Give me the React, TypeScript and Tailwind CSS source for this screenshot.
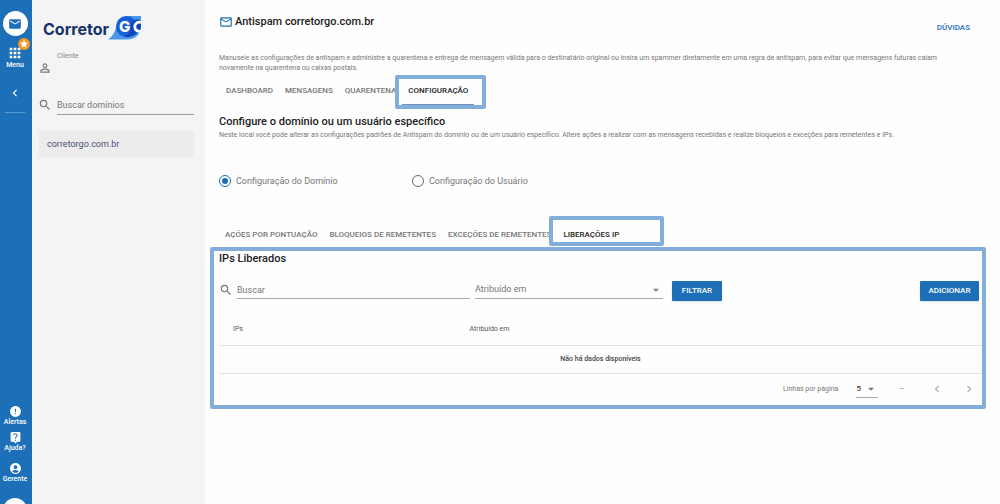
import React, { useState } from 'react';
import {
  MdAccountCircle,
  MdApps,
  MdArrowDropDown,
  MdChevronLeft,
  MdChevronRight,
  MdError,
  MdLiveHelp,
  MdMail,
  MdOutlineMail,
  MdPersonOutline,
  MdSearch,
  MdStar,
} from 'react-icons/md';

const mainTabs = ['Dashboard', 'Mensagens', 'Quarentena', 'Configuração'];

const configTabs = [
  'Ações por pontuação',
  'Bloqueios de remetentes',
  'Exceções de remetentes',
  'Liberações IP',
];

function Logo() {
  return (
    <svg width="102" height="26" viewBox="0 0 102 26" role="img" aria-label="Corretor GO">
      <text x="0" y="20" fontFamily="Inter, sans-serif" fontSize="16" fontWeight="700" fill="#16306b">
        Corretor
      </text>
      <path d="M65 24.5 C70 21 72 17 73 12 C75 5 80 1 87 1 H98 V12 C98 19 92 24.5 84 24.5 Z" fill="#4a98ec" />
      <circle cx="83.5" cy="11.5" r="10.5" fill="#1560d8" />
      <path d="M81 22 C87 19 88 14 88 9 C89 5 94 3 98 6 V12 C97 18 90 23 81 22 Z" fill="#0f46b8" />
      <text x="76" y="17" fontFamily="Inter, sans-serif" fontSize="15" fontWeight="800" fill="#fff">
        G
      </text>
      <path d="M98 7.4 A4.6 4.6 0 1 0 98 16" fill="none" stroke="#fff" strokeWidth="2.8" />
    </svg>
  );
}

function RailButton({ label, children }: { label: string; children: React.ReactNode }) {
  return (
    <button type="button" className="relative flex w-full flex-col items-center text-[7px] leading-[9px] font-medium text-white">
      {children}
      {label}
    </button>
  );
}

function Rail() {
  return (
    <nav className="flex w-8 shrink-0 flex-col items-center overflow-hidden bg-[#1d70b7] pr-[2px] pt-[11px] text-white">
      <button type="button" aria-label="E-mail" className="flex size-[25px] shrink-0 items-center justify-center rounded-full bg-white">
        <MdMail size={14} color="#1d70b7" />
      </button>
      <div className="mt-[9px] w-full">
        <RailButton label="Menu">
          <MdApps size={16} />
          <span className="absolute -top-[7px] right-0 flex size-3 items-center justify-center rounded-full bg-[#f8971d]">
            <MdStar size={10} />
          </span>
        </RailButton>
      </div>
      <button type="button" aria-label="Recolher" className="mt-4">
        <MdChevronLeft size={14} />
      </button>
      <hr className="mt-3 w-5 border-[#5b9bd0]" />
      <div className="mt-auto flex w-full flex-col">
        <RailButton label="Alertas">
          <MdError size={13} />
        </RailButton>
        <div className="mt-1">
          <RailButton label="Ajuda?">
            <MdLiveHelp size={13} />
          </RailButton>
        </div>
        <div className="mt-[9px]">
          <RailButton label="Gerente">
            <MdAccountCircle size={13} />
          </RailButton>
        </div>
      </div>
      <div className="mt-[14px] h-[6px] w-6 shrink-0 overflow-hidden">
        <div className="size-6 rounded-full bg-white" />
      </div>
    </nav>
  );
}

function Sidebar() {
  return (
    <aside className="w-[173px] shrink-0 bg-[#f4f4f4] pl-[7px] pr-[11px] pt-[15px]">
      <div className="pl-1">
        <Logo />
      </div>
      <div className="mt-[10px] grid grid-cols-[12px_1fr] gap-x-[6px]">
        <span className="col-start-2 text-[7px] leading-[10px] text-[#8a8a8a]">Cliente</span>
        <MdPersonOutline size={14} color="#777" className="col-start-1 -ml-px" />
      </div>
      <div className="mt-5 flex items-center gap-[5px]">
        <MdSearch size={14} color="#777" className="-ml-px shrink-0" />
        <input
          type="text"
          aria-label="Buscar domínios"
          placeholder="Buscar domínios"
          className="h-5 w-full min-w-0 border-b border-[#999] text-[9px] outline-none placeholder:text-[#777]"
        />
      </div>
      <a href="#corretorgo" className="mt-4 flex h-[27px] items-center bg-[#ececec] pl-2 text-[9px] text-[#495273]">
        corretorgo.com.br
      </a>
    </aside>
  );
}

interface TabsProps {
  tabs: string[];
  active: string;
  onChange: (tab: string) => void;
  frameClass: string;
}

function Tabs({ tabs, active, onChange, frameClass }: TabsProps) {
  return (
    <div role="tablist" className="flex">
      {tabs.map((tab) => (
        <button
          key={tab}
          type="button"
          role="tab"
          aria-selected={tab === active}
          onClick={() => onChange(tab)}
          className={`relative h-6 whitespace-nowrap px-[6px] text-[8px] font-medium uppercase ${
            tab === active ? 'text-[#222]' : 'text-[#777]'
          }`}
        >
          {tab}
          {tab === active && (
            <span className={`pointer-events-none absolute rounded-[2px] border-4 border-[#84aeda] ${frameClass}`} />
          )}
        </button>
      ))}
    </div>
  );
}

function Radio({ label, checked, onChange }: { label: string; checked: boolean; onChange: () => void }) {
  return (
    <label className="flex items-center gap-[5px] text-[9px] leading-3 text-[#777]">
      <input
        type="radio"
        name="alvo"
        checked={checked}
        onChange={onChange}
        className="size-3 appearance-none rounded-full border border-[#666] bg-clip-content p-[2px] checked:border-[#1d70b7] checked:bg-[#1d70b7]"
      />
      {label}
    </label>
  );
}

function ReleasedIps() {
  return (
    <section className="rounded-[2px] border-4 border-[#84aeda] pl-[5px]">
      <h2 className="text-[11px] leading-4 font-medium text-[#222]">IPs Liberados</h2>
      <div className="mt-[14px] flex items-end pr-[3px]">
        <MdSearch size={14} color="#777" className="mb-1 mr-1 shrink-0" />
        <input
          type="text"
          aria-label="Buscar"
          placeholder="Buscar"
          className="mb-[2px] h-[18px] min-w-0 flex-[233] border-b border-[#aaa] text-[9px] outline-none placeholder:text-[#777]"
        />
        <div className="relative mb-[2px] ml-[5px] flex-[188]">
          <select
            aria-label="Atribuído em"
            className="block h-[18px] w-full appearance-none border-b border-[#aaa] text-[9px] text-[#777] outline-none"
          >
            <option>Atribuído em</option>
          </select>
          <MdArrowDropDown size={14} color="#777" className="pointer-events-none absolute right-0 top-[2px]" />
        </div>
        <button type="button" className="ml-[9px] h-5 w-[50px] rounded-[1px] bg-[#1d70b7] text-[8px] font-medium text-white shadow">
          FILTRAR
        </button>
        <div className="flex flex-[257] justify-end">
          <button type="button" className="h-5 w-[59px] rounded-[1px] bg-[#1d70b7] text-[8px] font-medium text-white shadow">
            ADICIONAR
          </button>
        </div>
      </div>
      <table className="mt-3 w-full table-fixed text-[7px]">
        <thead>
          <tr className="h-8 border-b border-[#e2e2e2] text-left text-[#555]">
            <th className="w-[31%] pl-[14px] font-normal">IPs</th>
            <th className="pl-[14px] font-normal">Atribuído em</th>
          </tr>
        </thead>
        <tbody>
          <tr className="h-7 border-b border-[#e2e2e2] text-center font-medium text-[#444]">
            <td colSpan={2}>Não há dados disponíveis</td>
          </tr>
        </tbody>
      </table>
      <div className="flex h-[31px] items-center justify-end pr-[6px] text-[7px] text-[#777]">
        <label htmlFor="linhas">Linhas por página</label>
        <div className="relative ml-[18px]">
          <select
            id="linhas"
            className="block h-[18px] w-[22px] appearance-none border-b border-[#aaa] text-[8px] font-medium text-[#444] outline-none"
          >
            <option>5</option>
          </select>
          <MdArrowDropDown size={14} className="pointer-events-none absolute right-0 top-[2px]" />
        </div>
        <span className="ml-[21px]">–</span>
        <button type="button" aria-label="Página anterior" className="ml-[26px]">
          <MdChevronLeft size={14} color="#aaa" />
        </button>
        <button type="button" aria-label="Próxima página" className="ml-[18px]">
          <MdChevronRight size={14} color="#aaa" />
        </button>
      </div>
    </section>
  );
}

export default function App() {
  const [mainTab, setMainTab] = useState('Configuração');
  const [configTab, setConfigTab] = useState('Liberações IP');
  const [target, setTarget] = useState<'dominio' | 'usuario'>('dominio');

  return (
    <div className="flex h-screen overflow-hidden bg-[#fefefe] font-[Roboto,sans-serif]">
      <Rail />
      <Sidebar />
      <main className="min-w-0 flex-1 pl-[5px] pr-[14px] pt-[14px]">
        <div className="pl-[9px]">
          <header className="flex h-7 justify-between pr-4">
            <h1 className="flex h-4 items-center gap-[2px] text-[11px] font-medium text-[#222]">
              <MdOutlineMail size={14} color="#1d70b7" />
              Antispam corretorgo.com.br
            </h1>
            <a href="#duvidas" className="mt-[9px] text-[8px] leading-[10px] font-medium text-[#1d70b7]">
              DÚVIDAS
            </a>
          </header>
          <p className="mt-[11px] pr-10 text-[7px] leading-[10px] text-[#777]">
            Manuseie as configurações de antispam e administre a quarentena e entrega de mensagem válida para o
            destinatário original ou insira um spammer diretamente em uma regra de antispam, para evitar que mensagens
            futuras caiam novamente na quarentena ou caixas postais.
          </p>
          <div className="mt-[6px] pl-px">
            <Tabs
              tabs={mainTabs}
              active={mainTab}
              onChange={setMainTab}
              frameClass="-left-[7px] -right-3 -top-1 h-[34px] after:absolute after:bottom-0 after:left-[3px] after:right-2 after:h-px after:bg-[#6f93b8]"
            />
          </div>
          <h2 className="mt-[11px] text-[11px] leading-4 font-medium text-[#222]">
            Configure o domínio ou um usuário específico
          </h2>
          <p className="text-[7px] leading-[10px] text-[#777]">
            Neste local você pode alterar as configurações padrões de Antispam do domínio ou de um usuário específico.
            Altere ações a realizar com as mensagens recebidas e realize bloqueios e exceções para remetentes e IPs.
          </p>
          <fieldset className="mt-[35px] grid grid-cols-[193px_1fr]">
            <Radio label="Configuração do Domínio" checked={target === 'dominio'} onChange={() => setTarget('dominio')} />
            <Radio label="Configuração do Usuário" checked={target === 'usuario'} onChange={() => setTarget('usuario')} />
          </fieldset>
          <div className="mt-9">
            <Tabs tabs={configTabs} active={configTab} onChange={setConfigTab} frameClass="-left-2 -top-[7px] h-[30px] w-[115px]" />
          </div>
        </div>
        <ReleasedIps />
      </main>
    </div>
  );
}
